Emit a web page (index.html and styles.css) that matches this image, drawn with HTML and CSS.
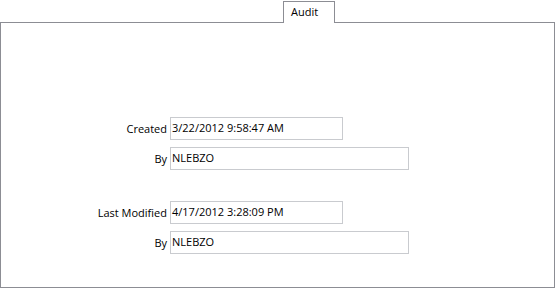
FILE: index.html
```html
<!DOCTYPE html>
<html>
<head>
<meta charset="utf-8">
<link rel="stylesheet" href="styles.css">
</head>
<body>
<div class="tabstrip">
  <div class="tab">Audit</div>
</div>
<div class="panel">
  <div class="form">
    <div class="group">
      <label class="lbl">Created</label>
      <div class="field short">3/22/2012 9:58:47 AM</div>
      <label class="lbl">By</label>
      <div class="field long">NLEBZO</div>
    </div>
    <div class="group">
      <label class="lbl">Last Modified</label>
      <div class="field short">4/17/2012 3:28:09 PM</div>
      <label class="lbl">By</label>
      <div class="field long">NLEBZO</div>
    </div>
  </div>
</div>
</body>
</html>
```
FILE: styles.css
```css
html, body {
  margin: 0;
  padding: 0;
  background: #ffffff;
}
body {
  font-family: "Open Sans", "Noto Sans", sans-serif;
  font-size: 11px;
  color: #000000;
  padding-top: 1px;
}
.tabstrip {
  display: flex;
  padding-left: 283px;
  position: relative;
  z-index: 1;
}
.tab {
  box-sizing: border-box;
  width: 52px;
  height: 22px;
  border: 1px solid #8c8d94;
  border-bottom: none;
  background: #ffffff;
  line-height: 20px;
  margin-bottom: -1px;
  padding-left: 7px;
  padding-top: 0;
  color: #000000;
}
.panel {
  box-sizing: border-box;
  width: 555px;
  height: 266px;
  border: 1px solid #8c8d94;
  padding-top: 94px;
}
.form {
  display: flex;
  flex-direction: column;
  gap: 31px;
}
.group {
  display: grid;
  grid-template-columns: 166px auto;
  column-gap: 3px;
  row-gap: 7px;
  align-items: center;
}
.lbl {
  text-align: right;
  color: #000000;
  line-height: 21px;
  padding-bottom: 1px;
}
.field {
  box-sizing: border-box;
  height: 23px;
  border: 1px solid #c9cbcf;
  padding: 0 1px;
  line-height: 20px;
  color: #000000;
}
.short { width: 173px; }
.long { width: 239px; }
```
